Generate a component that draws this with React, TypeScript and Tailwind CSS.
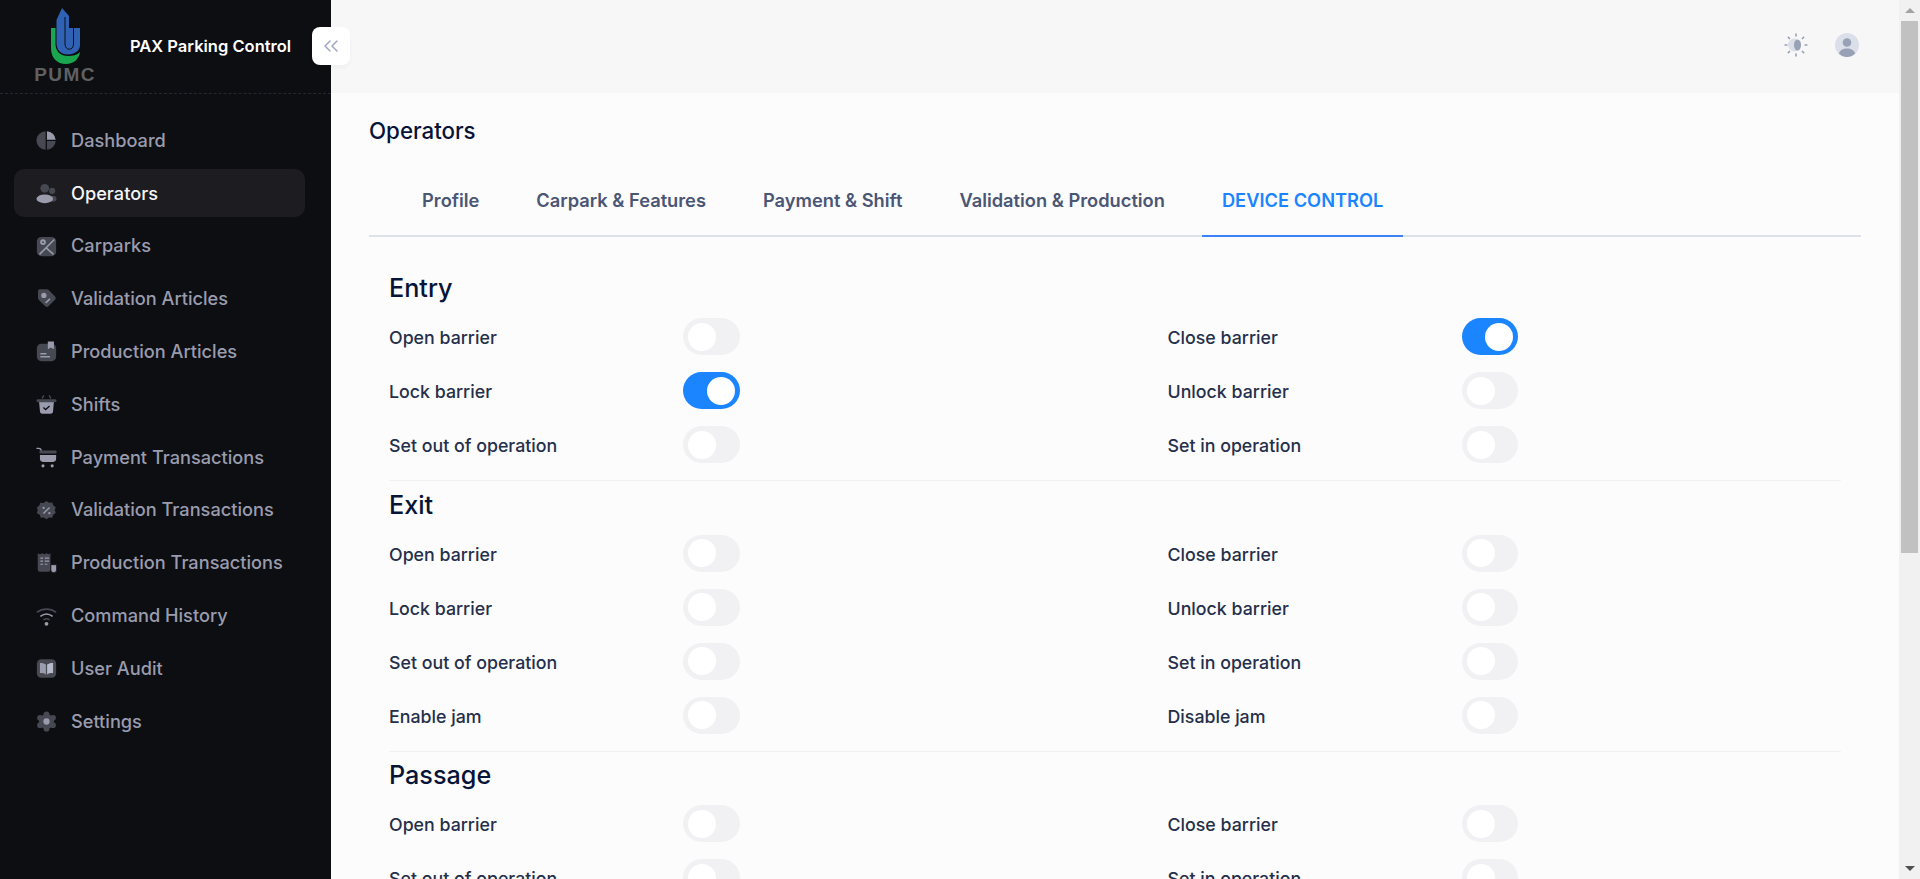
import { ChevronsLeft } from 'lucide-react';
import type { ReactNode } from 'react';

const DARK = '#464852';
const LIGHT = '#9a9cae';

const ICONS: Record<string, ReactNode> = {
  dashboard: (
    <>
      <path d="M11 1.500a10.500 10.500 0 1 0 0 21V1.500Z" fill={DARK} />
      <path d="M12.500 1.500a10.500 10.500 0 0 1 10 9.500h-10V1.500Z" fill={LIGHT} />
      <path d="M12.500 12.500h10a10.500 10.500 0 0 1-10 10v-10Z" fill={DARK} />
    </>
  ),
  operators: (
    <>
      <circle cx="10" cy="6" r="5" fill={DARK} />
      <circle cx="18.500" cy="9" r="3.500" fill={DARK} />
      <ellipse cx="19" cy="18" rx="4.500" ry="3.500" fill={DARK} />
      <ellipse cx="10" cy="18" rx="9.500" ry="5" fill={LIGHT} />
    </>
  ),
  carparks: (
    <>
      <rect x="1" y="1" width="22" height="22" rx="5" fill={DARK} />
      <path d="M4 21 21 4M11 13l9 8" stroke={LIGHT} strokeWidth="1.800" fill="none" />
      <circle cx="8" cy="7" r="3.200" fill={LIGHT} />
      <circle cx="8" cy="7" r="1.100" fill={DARK} />
    </>
  ),
  tag: (
    <>
      <path d="M3 1.500h9.500a3 3 0 0 1 2 .8l7 7a3 3 0 0 1 0 4.300l-7 7a3 3 0 0 1-4.200 0l-7-7a3 3 0 0 1-1-2.200V3.500a2 2 0 0 1 1.700-2Z" fill={DARK} />
      <circle cx="9" cy="8.500" r="3" fill={LIGHT} />
      <path d="m11 17 5-4.500" stroke={LIGHT} strokeWidth="1.800" />
    </>
  ),
  note: (
    <>
      <rect x="1" y="3" width="22" height="20" rx="5" fill={DARK} />
      <path d="M13.500 .5h7v9l-3.500-2.200-3.500 2.200v-9Z" fill={LIGHT} />
      <path d="M5 14.500h7M5 18h11" stroke={LIGHT} strokeWidth="1.600" />
    </>
  ),
  basket: (
    <>
      <path d="M3.500 8.500h17l-1 11a3 3 0 0 1-3 3h-9a3 3 0 0 1-3-3l-1-11Z" fill={LIGHT} />
      <rect x=".5" y="6" width="23" height="3.500" rx="1.700" fill={DARK} />
      <path d="M7 5 9 1.500M17 5l-2-3.500" stroke={DARK} strokeWidth="1.600" />
      <path d="m8.500 15.500 2.500 2.300 4.500-4" stroke="#0d0e12" strokeWidth="1.500" fill="none" />
    </>
  ),
  cart: (
    <>
      <path d="M.5 1.500H3a3 3 0 0 1 3 3v1" stroke={LIGHT} strokeWidth="1.300" fill="none" />
      <rect x="4" y="4" width="19.500" height="3.500" rx="1" fill={DARK} />
      <path d="M4.500 9h18.500v4.500a3.500 3.500 0 0 1-3.500 3.500H8a3.500 3.500 0 0 1-3.500-3.500V9Z" fill={LIGHT} />
      <circle cx="8" cy="21.500" r="1.800" fill={LIGHT} />
      <circle cx="18.500" cy="21.500" r="1.800" fill={LIGHT} />
    </>
  ),
  percent: (
    <>
      <path d="M12 1l3 2 3.500-.2 1.200 3.300 2.800 2.100-1 3.300 1 3.300-2.800 2.100-1.200 3.300-3.500-.2-3 2-3-2-3.500.2-1.200-3.300L1 15.100l1-3.300-1-3.300 2.800-2.100L5 3.100l3.500.2 3.500-2.300Z" fill={DARK} />
      <path d="m8.500 15.500 7-7" stroke={LIGHT} strokeWidth="1.600" />
      <circle cx="8.700" cy="9" r="1.300" fill={LIGHT} />
      <circle cx="15.300" cy="15" r="1.300" fill={LIGHT} />
    </>
  ),
  receipt: (
    <>
      <path d="M2 1.500l2.500 1 2.500-1 2.500 1 2.500-1 2.500 1 2-1V20a2.500 2.500 0 0 1-2.500 2.500H4.500A2.500 2.500 0 0 1 2 20V1.500Z" fill={DARK} />
      <path d="M5 7h3M10 7h5M5 10.500h3M10 10.500h5M5 14h3M10 14h3" stroke={LIGHT} strokeWidth="1.300" />
      <path d="M17 14.500h6.500v6a3 3 0 0 1-3 3h-.5a3 3 0 0 1-3-3v-6Z" fill={LIGHT} stroke="#0d0e12" strokeWidth=".8" />
    </>
  ),
  wifi: (
    <>
      <path d="M1 8.500c6.500-5 15.500-5 22 0" stroke={DARK} strokeWidth="1.800" fill="none" />
      <path d="M5 13c4.500-3.500 9.500-3.500 14 0" stroke={LIGHT} strokeWidth="1.800" fill="none" />
      <path d="M8.500 17c2-1.500 5-1.500 7 0" stroke={DARK} strokeWidth="1.800" fill="none" />
      <circle cx="12" cy="21.500" r="2.200" fill={LIGHT} />
    </>
  ),
  book: (
    <>
      <rect x="1" y="1.500" width="22" height="21" rx="5" fill={DARK} />
      <path d="M11.300 7.500C9.500 6 7 5.500 4.500 5.700v11.600c2.600-.2 5 .2 6.800 1.700V7.500Z" fill={LIGHT} />
      <path d="M12.700 7.500c1.800-1.500 4.300-2 6.800-1.800v11.600c-2.600-.2-5 .2-6.800 1.700V7.500Z" fill="#b7bac8" />
    </>
  ),
  settings: (
    <>
      <circle cx="12" cy="12" r="8.500" fill={DARK} />
      <circle cx="12" cy="3.800" r="3.300" fill={DARK} />
      <circle cx="19.400" cy="7.800" r="3.300" fill={DARK} />
      <circle cx="19.400" cy="16.200" r="3.300" fill={DARK} />
      <circle cx="12" cy="20.200" r="3.300" fill={DARK} />
      <circle cx="4.600" cy="16.200" r="3.300" fill={DARK} />
      <circle cx="4.600" cy="7.800" r="3.300" fill={DARK} />
      <circle cx="12" cy="12" r="3.600" fill={LIGHT} />
    </>
  ),
};

const NAV = [
  { label: 'Dashboard', icon: 'dashboard' },
  { label: 'Operators', icon: 'operators', active: true },
  { label: 'Carparks', icon: 'carparks' },
  { label: 'Validation Articles', icon: 'tag' },
  { label: 'Production Articles', icon: 'note' },
  { label: 'Shifts', icon: 'basket' },
  { label: 'Payment Transactions', icon: 'cart' },
  { label: 'Validation Transactions', icon: 'percent' },
  { label: 'Production Transactions', icon: 'receipt' },
  { label: 'Command History', icon: 'wifi' },
  { label: 'User Audit', icon: 'book' },
  { label: 'Settings', icon: 'settings' },
];

const TABS = ['Profile', 'Carpark & Features', 'Payment & Shift', 'Validation & Production', 'DEVICE CONTROL'];

type Row = [string, boolean, string, boolean];

const SECTIONS: { title: string; rows: Row[] }[] = [
  {
    title: 'Entry',
    rows: [
      ['Open barrier', false, 'Close barrier', true],
      ['Lock barrier', true, 'Unlock barrier', false],
      ['Set out of operation', false, 'Set in operation', false],
    ],
  },
  {
    title: 'Exit',
    rows: [
      ['Open barrier', false, 'Close barrier', false],
      ['Lock barrier', false, 'Unlock barrier', false],
      ['Set out of operation', false, 'Set in operation', false],
      ['Enable jam', false, 'Disable jam', false],
    ],
  },
  {
    title: 'Passage',
    rows: [
      ['Open barrier', false, 'Close barrier', false],
      ['Set out of operation', false, 'Set in operation', false],
    ],
  },
];

function Logo() {
  return (
    <div className="flex w-[60px] flex-col items-center">
      <svg width="31" height="57" viewBox="0 0 31 57">
        <path d="M1 20H5.500V36C5.500 44 11 48 18 48C23 48 27 47 30 44C29 51 24 56 16 56C7 56 1 50 1 40Z" fill="#1aa64f" />
        <path d="M6.500 12 12 0 19 8V20H30V37C30 43 24 46.500 18 46.500C11 46.500 6.500 42 6.500 35Z" fill="#2f62b5" />
        <path d="M15 9V36C15 43 23.500 43 23.500 36V20" stroke="#0d0e12" strokeWidth="1" fill="none" />
      </svg>
      <span className="mt-[-2px] font-['Liberation_Sans',sans-serif] text-[19px] leading-[23px] font-bold tracking-[1.4px] text-[#5f6063]">PUMC</span>
    </div>
  );
}

function Toggle({ on }: { on: boolean }) {
  return (
    <div className={`flex h-[37px] w-[56.5px] items-center rounded-full px-[5px] ${on ? 'justify-end bg-[#1b84ff]' : 'justify-start bg-[#f1f1f4]'}`}>
      <div className="size-[28px] rounded-full bg-white" />
    </div>
  );
}

function Cell({ label, on }: { label: string; on: boolean }) {
  return (
    <div className="flex items-center">
      <span className="w-[294px] pt-[4px] text-[17.8px] font-medium text-[#252f4a]">{label}</span>
      <Toggle on={on} />
    </div>
  );
}

function Scrollbar() {
  return (
    <div className="flex h-full w-[21px] shrink-0 flex-col bg-[#f1f1f1] px-[2px]">
      <div className="flex h-[21px] items-center justify-center">
        <div className="h-0 w-0 border-x-[5px] border-b-[5px] border-x-transparent border-b-[#a3a3a3]" />
      </div>
      <div className="h-[532px] bg-[#c1c1c1]" />
      <div className="flex-1" />
      <div className="flex h-[21px] items-center justify-center">
        <div className="h-0 w-0 border-x-[5px] border-t-[5px] border-x-transparent border-t-[#505050]" />
      </div>
    </div>
  );
}

export default function App() {
  return (
    <div className="relative flex h-[879px] w-full overflow-hidden bg-[#fcfcfc] font-['Inter',sans-serif]">
      <aside className="flex w-[331px] shrink-0 flex-col bg-[#0d0e12]">
        <div className="flex h-[94px] shrink-0 items-center gap-[35px] border-b border-dashed border-[#26272f] pl-[35px]">
          <Logo />
          <span className="text-[16.5px] font-semibold text-white">PAX Parking Control</span>
        </div>
        <nav className="flex flex-col gap-[4.8px] pt-[22.5px] pr-[26px] pl-[14px]">
          {NAV.map((item) => (
            <div
              key={item.label}
              className={`flex h-[48px] items-center gap-[14px] rounded-[10px] pl-[22px] ${item.active ? 'bg-[#1c1c21] text-[#f5f5f5]' : 'text-[#9a9cae]'}`}
            >
              <svg width="21" height="21" viewBox="0 0 24 24" className="shrink-0">
                {ICONS[item.icon]}
              </svg>
              <span className="text-[18.2px] font-medium">{item.label}</span>
            </div>
          ))}
        </nav>
      </aside>

      <div className="flex min-w-0 flex-1 flex-col">
        <header className="flex h-[93px] shrink-0 items-center justify-end gap-[27px] bg-[#f7f7f7] pr-[40px] pb-[3px]">
          <svg width="24" height="24" viewBox="0 0 24 24">
            <path d="M12 .5v3M12 20.500v3M.5 12h3M20.500 12h3M3.900 3.900l2.100 2.100M18 18l2.100 2.100M3.900 20.100 6 18M18 6l2.100-2.100" stroke="#99a1b7" strokeWidth="1.600" />
            <circle cx="10.500" cy="12" r="6.500" fill="#dbdfe9" />
            <ellipse cx="13.500" cy="12" rx="3.500" ry="5.500" fill="#99a1b7" />
          </svg>
          <svg width="24" height="24" viewBox="0 0 24 24">
            <circle cx="12" cy="12" r="12" fill="#dbdfe9" />
            <circle cx="12" cy="9.500" r="4.300" fill="#99a1b7" />
            <path d="M3.800 20.800C5 17 8 15.500 12 15.500s7 1.500 8.200 5.300A12 12 0 0 1 3.800 20.800Z" fill="#99a1b7" />
          </svg>
        </header>

        <main className="min-h-0 flex-1 overflow-hidden px-[38px]">
          <h1 className="pt-[24px] text-[22.3px] leading-[28px] font-medium text-[#071437]">Operators</h1>
          <div className="mt-[21px] flex h-[71px] gap-[17px] border-b-2 border-[#dde2e8] pl-[33px]">
            {TABS.map((tab, i) => (
              <div
                key={tab}
                className={`mb-[-2px] flex items-center border-b-2 px-[20px] text-[18.28px] font-semibold ${i === 4 ? 'border-[#3b82f6] text-[#1b84ff]' : 'border-transparent text-[#4b5675]'}`}
              >
                {tab}
              </div>
            ))}
          </div>
          <div className="px-[20px] pt-[34px]">
            {SECTIONS.map((section, i) => (
              <section key={section.title} className={i > 0 ? 'mt-[17px] border-t border-[#f1f1f4] pt-[6.5px]' : ''}>
                <h2 className="text-[25.2px] leading-[34px] font-medium text-[#071437]">{section.title}</h2>
                <div className="mt-[13px] grid grid-cols-2 gap-x-[105px] gap-y-[17px]">
                  {section.rows.map((row) => (
                    <div key={row[0] + section.title} className="contents">
                      <Cell label={row[0]} on={row[1]} />
                      <Cell label={row[2]} on={row[3]} />
                    </div>
                  ))}
                </div>
              </section>
            ))}
          </div>
        </main>
      </div>

      <Scrollbar />

      <button className="absolute top-[27px] left-[312px] flex size-[38px] items-center justify-center rounded-lg bg-white shadow-[0_3px_4px_rgba(0,0,0,0.03)]">
        <ChevronsLeft size={24} strokeWidth={1.5} className="text-[#a1a5c7]" />
      </button>
    </div>
  );
}
